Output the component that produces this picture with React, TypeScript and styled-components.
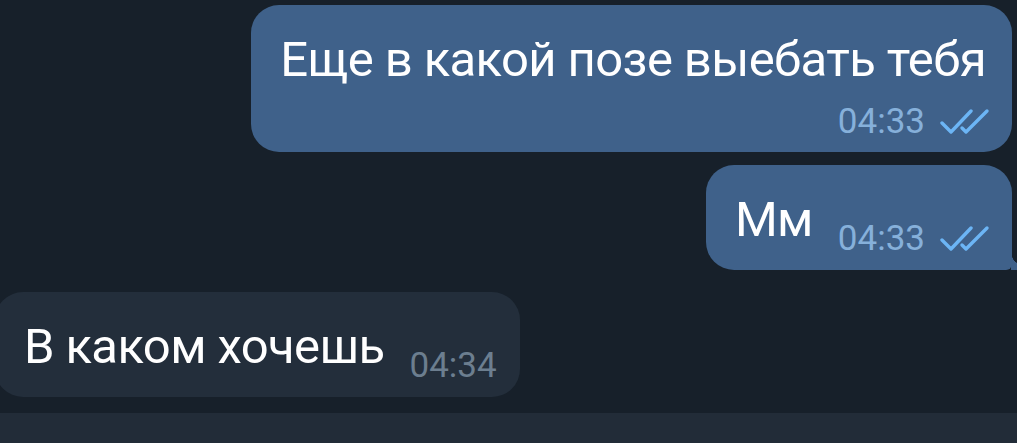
import React from 'react';
import styled, { createGlobalStyle } from 'styled-components';

const Global = createGlobalStyle`
  html, body {
    margin: 0;
    padding: 0;
    background: #17202a;
  }
  body {
    font-family: Roboto, "Noto Sans", "Liberation Sans", sans-serif;
    overflow: hidden;
  }
`;

const Screen = styled.div`
  width: 1017px;
  height: 443px;
  background: #17202a;
  display: flex;
  flex-direction: column;
  overflow: hidden;
`;

const Row = styled.div<{ $out?: boolean; $gap: number }>`
  display: flex;
  justify-content: ${(p) => (p.$out ? 'flex-end' : 'flex-start')};
  padding: 0 5px 0 0;
  margin-top: ${(p) => p.$gap}px;
`;

const Bubble = styled.div<{ $out?: boolean; $tail?: boolean; $stack?: boolean }>`
  position: relative;
  box-sizing: border-box;
  display: flex;
  flex-direction: ${(p) => (p.$stack ? 'column' : 'row')};
  align-items: ${(p) => (p.$stack ? 'flex-end' : 'flex-start')};
  background: ${(p) => (p.$out ? '#3f618a' : '#232e3b')};
  border-radius: 28px;
  border-bottom-right-radius: ${(p) => (p.$out && p.$tail ? '6px' : '28px')};
  padding: 27px 22px 0 29px;
  height: ${(p) => (p.$stack ? 147 : 105)}px;
  margin-left: ${(p) => (p.$out ? 0 : -5)}px;
  ${(p) => (!p.$out ? 'padding-left: 29px; padding-right: 23px;' : '')}

  ${(p) =>
    p.$out && p.$tail
      ? `&::after {
    content: '';
    position: absolute;
    right: -10px;
    bottom: 0;
    width: 11px;
    height: 16px;
    background: radial-gradient(circle at 100% 0, transparent 10px, #3f618a 10.5px);
  }`
      : ''}
`;

const Text = styled.div<{ $stack?: boolean }>`
  color: #ffffff;
  font-size: 49px;
  line-height: 55px;
  letter-spacing: -0.6px;
  white-space: nowrap;
  align-self: ${(p) => (p.$stack ? 'flex-start' : 'auto')};
  margin-right: ${(p) => (p.$stack ? 4 : 0)}px;
`;

const Meta = styled.div<{ $out?: boolean; $stack?: boolean }>`
  display: flex;
  align-items: center;
  gap: 15px;
  color: ${(p) => (p.$out ? '#86b0da' : '#6c7e8f')};
  font-size: 35px;
  line-height: 35px;
  margin-left: ${(p) => (p.$stack ? 0 : 25)}px;
  margin-top: ${(p) => (p.$stack ? 17 : 29)}px;
  white-space: nowrap;
`;

const Checks = () => (
  <svg width="50" height="28" viewBox="0 0 50 28" fill="none" stroke="#6cb5f5" strokeWidth="3.4" strokeLinecap="round" strokeLinejoin="round">
    <path d="M2 15 L11 24 L31 3" />
    <path d="M22 20 L26 24 L47 3" />
  </svg>
);

const Composer = styled.div`
  margin-top: auto;
  height: 30px;
  background: #222c38;
`;

export default function App() {
  return (
    <Screen>
      <Global />
      <Row $out $gap={5}>
        <Bubble $out $stack>
          <Text $stack>Еще в какой позе выебать тебя</Text>
          <Meta $out $stack>
            04:33
            <Checks />
          </Meta>
        </Bubble>
      </Row>
      <Row $out $gap={13}>
        <Bubble $out $tail>
          <Text>Мм</Text>
          <Meta $out>
            04:33
            <Checks />
          </Meta>
        </Bubble>
      </Row>
      <Row $gap={22}>
        <Bubble>
          <Text>В каком хочешь</Text>
          <Meta>04:34</Meta>
        </Bubble>
      </Row>
      <Composer />
    </Screen>
  );
}
